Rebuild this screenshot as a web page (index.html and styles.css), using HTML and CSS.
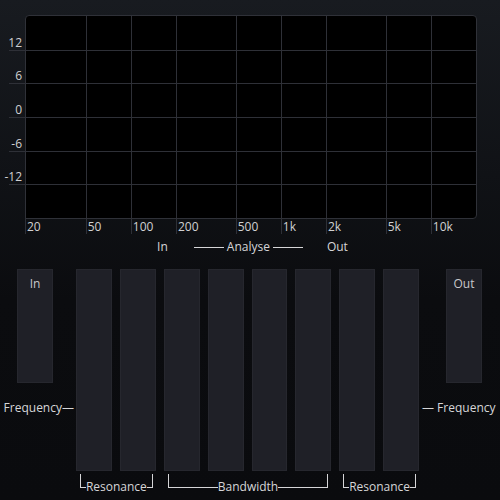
FILE: index.html
```html
<!DOCTYPE html>
<html>
<head>
<meta charset="utf-8">
<link rel="stylesheet" href="styles.css">
</head>
<body>
<div class="app">
  <div class="plot">
    <div class="hline" style="top:16.667%"><span class="ylabel">12</span></div>
    <div class="hline" style="top:33.333%"><span class="ylabel">6</span></div>
    <div class="hline" style="top:50%"><span class="ylabel">0</span></div>
    <div class="hline" style="top:66.667%"><span class="ylabel">-6</span></div>
    <div class="hline" style="top:83.333%"><span class="ylabel">-12</span></div>
    <div class="vline edge"><span class="xlabel">20</span></div>
    <div class="vline" style="left:13.27%"><span class="xlabel">50</span></div>
    <div class="vline" style="left:23.30%"><span class="xlabel">100</span></div>
    <div class="vline" style="left:33.33%"><span class="xlabel">200</span></div>
    <div class="vline" style="left:46.60%"><span class="xlabel">500</span></div>
    <div class="vline" style="left:56.63%"><span class="xlabel">1k</span></div>
    <div class="vline" style="left:66.67%"><span class="xlabel">2k</span></div>
    <div class="vline" style="left:79.93%"><span class="xlabel">5k</span></div>
    <div class="vline" style="left:89.97%"><span class="xlabel">10k</span></div>
  </div>

  <div class="analyse">
    <span class="an-in">In</span>
    <span class="rule"></span>
    <span class="an-label">Analyse</span>
    <span class="rule"></span>
    <span class="an-out">Out</span>
  </div>

  <div class="controls">
    <div class="side side-left">
      <div class="meter">In</div>
      <div class="freq freq-left">Frequency—</div>
    </div>
    <div class="sliders">
      <div class="slider"></div>
      <div class="slider"></div>
      <div class="slider"></div>
      <div class="slider"></div>
      <div class="slider"></div>
      <div class="slider"></div>
      <div class="slider"></div>
      <div class="slider"></div>
      <div class="bracket span2"><span class="cap cap-l"></span><span class="btext">Resonance</span><span class="cap cap-r"></span></div>
      <div class="bracket span4"><span class="cap cap-l"></span><span class="btext">Bandwidth</span><span class="cap cap-r"></span></div>
      <div class="bracket span2"><span class="cap cap-l"></span><span class="btext">Resonance</span><span class="cap cap-r"></span></div>
    </div>
    <div class="side side-right">
      <div class="meter">Out</div>
      <div class="freq freq-right">— Frequency</div>
    </div>
  </div>
</div>
</body>
</html>
```

FILE: styles.css
```css
html, body {
  margin: 0;
  padding: 0;
  background: #0a0b0e;
}

.app {
  width: 500px;
  height: 500px;
  overflow: hidden;
  background: linear-gradient(180deg, #181b20 0%, #101216 35%, #0b0c0f 60%, #0a0b0e 100%);
  font-family: "Open Sans", "Noto Sans", sans-serif;
  font-size: 12px;
  line-height: 14px;
  color: #d6d6d8;
}

.plot {
  position: relative;
  box-sizing: border-box;
  margin: 15px 0 0 25px;
  width: 452px;
  height: 204px;
  background: #000;
  border: 1px solid #2f3138;
  border-radius: 4px;
  border-bottom-left-radius: 0;
}

.hline {
  position: absolute;
  left: -17px;
  right: 0;
  height: 1px;
  background: #2e3037;
}

.ylabel {
  position: absolute;
  left: -8px;
  width: 21px;
  bottom: 1px;
  text-align: right;
  color: #d0d0d2;
}

.vline {
  position: absolute;
  top: 0;
  bottom: -16px;
  width: 1px;
  background: #2e3037;
}

.vline.edge {
  left: -1px;
  top: auto;
  height: 16px;
  bottom: -16px;
}

.xlabel {
  position: absolute;
  left: 2px;
  bottom: 0;
  white-space: nowrap;
  color: #d0d0d2;
}

.analyse {
  display: flex;
  align-items: center;
  justify-content: center;
  margin-top: 21px;
  padding-left: 5px;
  height: 14px;
}

.rule {
  display: block;
  width: 30px;
  height: 1px;
  background: #d6d6d8;
}

.an-in { margin-right: 26px; }
.an-label { margin: 0 3px; }
.an-out { margin-left: 24px; }

.controls {
  display: flex;
  margin-top: 15px;
}

.side {
  display: flex;
  flex-direction: column;
}

.side-left { width: 76px; }
.side-right { width: 81px; }

.meter {
  box-sizing: border-box;
  width: 36px;
  height: 114px;
  padding-top: 7px;
  text-align: center;
  background: #1f2027;
  border: 1px solid #26272e;
  color: #c9c9cc;
}

.side-left .meter { margin-left: 17px; }
.side-right .meter { margin-left: 27px; }

.freq {
  margin-top: 18px;
  white-space: nowrap;
}

.freq-left {
  text-align: right;
  padding-right: 2px;
}

.freq-right {
  padding-left: 3px;
}

.sliders {
  width: 343px;
  display: grid;
  grid-template-columns: repeat(8, 1fr);
  grid-template-rows: 202px auto;
  column-gap: 8px;
  row-gap: 3px;
}

.slider {
  box-sizing: border-box;
  background: #1f2027;
  border: 1px solid #26272e;
}

.bracket {
  display: flex;
  align-items: flex-start;
  margin: 0 3px 0 4px;
}

.span2 { grid-column: span 2; }
.span4 { grid-column: span 4; }

.cap {
  flex: 1;
  height: 13px;
  border-bottom: 1px solid #d6d6d8;
}

.cap-l { border-left: 1px solid #d6d6d8; }
.cap-r { border-right: 1px solid #d6d6d8; }

.btext {
  margin-top: 6px;
  white-space: nowrap;
}
```
